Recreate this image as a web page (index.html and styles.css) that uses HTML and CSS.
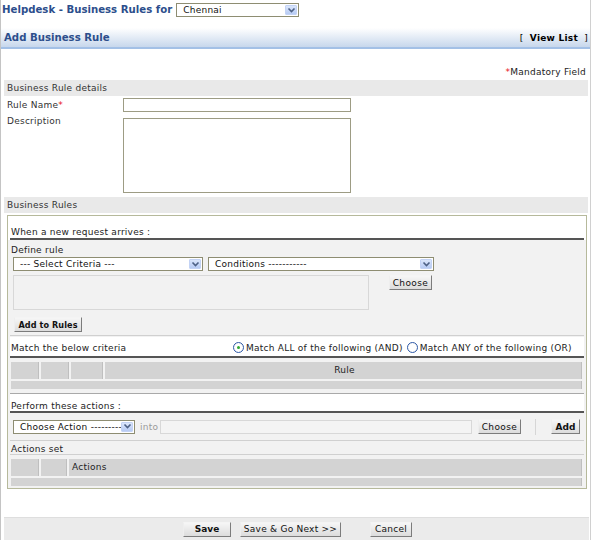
FILE: index.html
```html
<!DOCTYPE html>
<html>
<head>
<meta charset="utf-8">
<link rel="stylesheet" href="styles.css">
</head>
<body>
<div class="page">
  <div class="topbar">
    <span class="title">Helpdesk - Business Rules for</span>
    <div class="sel sel-site"><span class="sel-text">Chennai</span><i class="arr"><svg width="9" height="7" viewBox="0 0 9 7"><path d="M1.5 1.5 L4.5 4.5 L7.5 1.5" fill="none" stroke="#4d6185" stroke-width="1.6"/></svg></i></div>
  </div>
  <div class="hdr">
    <span class="hdr-title">Add Business Rule</span>
    <span class="viewlist">[&nbsp;&nbsp;<b>View List</b>&nbsp;&nbsp;]</span>
  </div>
  <div class="mand"><span class="star">*</span>Mandatory Field</div>
  <div class="sec">Business Rule details</div>
  <div class="frow"><label class="flabel">Rule Name<span class="star">*</span></label><div class="inp"></div></div>
  <div class="frow"><label class="flabel">Description</label><div class="inp ta"></div></div>
  <div class="sec sec2">Business Rules</div>
  <div class="box">
    <div class="subhead first">When a new request arrives :</div>
    <div class="gray define">
      <div class="lbl">Define rule</div>
      <div class="selrow">
        <div class="sel sel-crit"><span class="sel-text">--- Select Criteria ---</span><i class="arr"><svg width="9" height="7" viewBox="0 0 9 7"><path d="M1.5 1.5 L4.5 4.5 L7.5 1.5" fill="none" stroke="#4d6185" stroke-width="1.6"/></svg></i></div>
        <div class="sel sel-cond"><span class="sel-text">Conditions -----------</span><i class="arr"><svg width="9" height="7" viewBox="0 0 9 7"><path d="M1.5 1.5 L4.5 4.5 L7.5 1.5" fill="none" stroke="#4d6185" stroke-width="1.6"/></svg></i></div>
      </div>
      <div class="critrow">
        <div class="critbox"></div>
        <button class="btn btn-choose">Choose</button>
      </div>
      <button class="btn btn-add">Add to Rules</button>
    </div>
    <div class="subhead match">
      <span class="match-lbl">Match the below criteria</span>
      <span class="radio-item"><i class="radio on"></i>Match ALL of the following (AND)</span>
      <span class="radio-item"><i class="radio"></i>Match ANY of the following (OR)</span>
    </div>
    <div class="tblarea">
      <div class="thead">
        <div class="th c1"></div><div class="th c2"></div><div class="th c3"></div><div class="th grow center">Rule</div>
      </div>
      <div class="tfoot"></div>
    </div>
    <div class="subhead perform">Perform these actions :</div>
    <div class="gray actrow">
      <div class="sel sel-act"><span class="sel-text">Choose Action ---------</span><i class="arr"><svg width="9" height="7" viewBox="0 0 9 7"><path d="M1.5 1.5 L4.5 4.5 L7.5 1.5" fill="none" stroke="#4d6185" stroke-width="1.6"/></svg></i></div>
      <span class="into">into</span>
      <div class="into-inp"></div>
      <button class="btn btn-choose2">Choose</button>
      <span class="vsep"></span>
      <button class="btn btn-add2">Add</button>
    </div>
    <div class="gray actset">Actions set</div>
    <div class="tblarea tbl2">
      <div class="thead">
        <div class="th c1"></div><div class="th c2b"></div><div class="th grow">Actions</div>
      </div>
      <div class="tfoot"></div>
    </div>
  </div>
  <div class="footer">
    <button class="btn fbtn save">Save</button>
    <button class="btn fbtn next">Save &amp; Go Next &gt;&gt;</button>
    <button class="btn fbtn cancel">Cancel</button>
  </div>
</div>
</body>
</html>
```

FILE: styles.css
```css
* { box-sizing: border-box; }
body {
  margin: 0;
  background: #fff;
  font-family: "DejaVu Sans", sans-serif;
  font-size: 9px;
  letter-spacing: 0.25px;
  color: #222;
}
.page {
  width: 591px;
  height: 540px;
  border-left: 1px solid #c4c4c4;
  border-right: 1px solid #d0d0d0;
  display: flex;
  flex-direction: column;
}
.topbar {
  height: 22px;
  display: flex;
  align-items: flex-start;
  padding-left: 1px;
  padding-top: 3px;
}
.title {
  font-family: "DejaVu Sans Condensed", "DejaVu Sans", sans-serif;
  font-size: 11.3px;
  letter-spacing: 0;
  font-weight: bold;
  color: #2c4e8c;
  line-height: 14px;
}
.sel {
  display: flex;
  align-items: center;
  height: 14px;
  border: 1px solid #8e8d72;
  background: #fff;
  padding: 1px;
}
.sel-text {
  flex: 1;
  padding-left: 5px;
  color: #111;
  white-space: nowrap;
  overflow: hidden;
}
.arr {
  width: 12px;
  height: 10px;
  background: linear-gradient(#dbe6fb, #b7cbf4);
  border: 1px solid #c3d3f5;
  border-radius: 1px;
  display: flex;
  align-items: center;
  justify-content: center;
}
.sel-site { margin-left: 4px; width: 123px; }
.hdr {
  margin-top: 6px;
  height: 21px;
  background: linear-gradient(#ffffff, #c7d7ec);
  border-bottom: 2px solid #a3c0e6;
  display: flex;
  justify-content: space-between;
  align-items: center;
  padding: 0 0 0 3px;
}
.hdr-title {
  font-family: "DejaVu Sans Condensed", "DejaVu Sans", sans-serif;
  font-size: 11.3px;
  letter-spacing: 0;
  font-weight: bold;
  color: #2c4e8c;
}
.viewlist {
  font-size: 9px;
  color: #000;
  padding-right: 2px;
}
.star { color: #e8101a; }
.mand {
  margin-top: 17px;
  text-align: right;
  padding-right: 4px;
  height: 12px;
  line-height: 12px;
}
.sec {
  margin: 2px 2px 0 3px;
  height: 16px;
  line-height: 16px;
  background: #e9e9e9;
  padding-left: 3px;
  color: #333;
}
.frow {
  display: flex;
  padding-left: 6px;
  margin-top: 2px;
}
.flabel {
  width: 116px;
  line-height: 14px;
  color: #333;
}
.inp {
  width: 228px;
  height: 14px;
  border: 1px solid #9d9c84;
  background: #fff;
}
.ta { height: 75px; margin-top: 4px; }
.sec2 { margin-top: 4px; }
.box {
  margin: 2px 3px 0 6px;
  height: 274px;
  border: 1px solid #b6b99b;
  padding: 0 2px 0 2px;
  background: #f2f2f2;
}
.subhead {
  background: #fff;
  border-bottom: 2px solid #555;
  height: 19px;
  padding: 7px 0 0 1px;
  color: #222;
}
.subhead.first { height: 24px; padding-top: 11px; margin: 0 -2px; padding-left: 3px; border-bottom: none; position: relative; }
.subhead.first::after {
  content: "";
  position: absolute;
  left: 2px; right: 2px; bottom: 0;
  border-bottom: 2px solid #555;
}
.gray { background: #f2f2f2; }
.define {
  padding: 5px 0 0 0;
  height: 96px;
  border-bottom: 1px solid #d0d0d0;
}
.lbl { padding-left: 1px; height: 10px; line-height: 10px; }
.selrow { display: flex; gap: 5px; margin-top: 2px; padding-left: 3px; }
.sel-crit { width: 190px; }
.sel-cond { width: 226px; }
.critrow { display: flex; margin-top: 4px; padding-left: 3px; }
.critbox {
  width: 356px;
  height: 35px;
  border: 1px solid #d8d8d8;
  background: #f2f2f2;
}
.btn {
  font-family: inherit;
  font-size: 9px;
  letter-spacing: 0.25px;
  height: 15px;
  padding: 0 2px;
  white-space: nowrap;
  background: linear-gradient(#f6f6f6, #dcdcdc);
  border: 1px solid;
  border-color: #f4f4f4 #7c7c7c #7c7c7c #eeeeee;
  color: #111;
  line-height: 12px;
}
.btn-choose { margin-left: 20px; width: 43px; letter-spacing: 0.4px; }
.btn-add {
  margin: 7px 0 0 4px;
  width: 68px;
  font-weight: bold;
  font-family: "DejaVu Sans Condensed", "DejaVu Sans", sans-serif;
  letter-spacing: 0.1px;
}
.match {
  display: flex;
  align-items: flex-end;
  padding: 0 0 3px 1px;
  height: 21px;
  margin-top: 1px;
}
.match-lbl { width: 222px; }
.radio-item { display: flex; align-items: center; margin-right: 4px; }
.radio {
  width: 11px;
  height: 11px;
  border: 1px solid #2f5aa8;
  border-radius: 50%;
  background: radial-gradient(#fff 55%, #e4e4e4);
  margin-right: 2px;
  display: inline-block;
  position: relative;
}
.radio.on::after {
  content: "";
  position: absolute;
  left: 3px; top: 3px;
  width: 3px; height: 3px;
  border-radius: 50%;
  background: #31a931;
}
.tblarea {
  padding: 4px 2px 4px 1px;
  border-bottom: 1px solid #a9a9a9;
}
.thead { display: flex; gap: 2px; height: 17px; }
.th {
  background: #d3d3d3;
  border-right: 1px solid #bfbfbf;
  line-height: 17px;
  color: #222;
}
.c1 { width: 28px; }
.c2 { width: 28px; }
.c3 { width: 32px; }
.c2b { width: 26px; }
.grow { flex: 1; padding-left: 3px; }
.center { text-align: center; }
.tfoot {
  height: 8px;
  margin-top: 2px;
  background: #d3d3d3;
  border-right: 1px solid #bfbfbf;
}
.perform { margin-top: 0; height: 19px; padding-top: 7px; }
.actrow {
  display: flex;
  align-items: center;
  height: 28px;
  padding: 0 0 0 3px;
  border-bottom: 1px solid #d0d0d0;
}
.sel-act { width: 122px; }
.into { color: #9a9a9a; margin-left: 5px; width: 20px; }
.into-inp {
  width: 312px;
  height: 14px;
  border: 1px solid #d8d8d8;
  background: #f4f4f4;
}
.btn-choose2 { margin-left: 6px; width: 43px; letter-spacing: 0.4px; }
.vsep { width: 1px; height: 16px; background: #d6d6d6; margin: 0 15px 0 14px; }
.btn-add2 { width: 29px; font-weight: bold; letter-spacing: 0; }
.actset {
  padding: 3px 0 0 1px;
  height: 14px;
  border-bottom: 1px solid #d0d0d0;
}
.tbl2 { border-bottom: none; }
.footer {
  margin-top: auto;
  height: 23px;
  background: #ebebeb;
  border-top: 1px solid #dedede;
  margin-left: 3px;
  margin-right: 1px;
  display: flex;
  align-items: center;
  padding-left: 179px;
}
.fbtn { height: 15px; }
.save { width: 48px; font-weight: bold; letter-spacing: 0; }
.next { width: 101px; margin-left: 9px; }
.cancel { width: 42px; margin-left: 29px; }
```
